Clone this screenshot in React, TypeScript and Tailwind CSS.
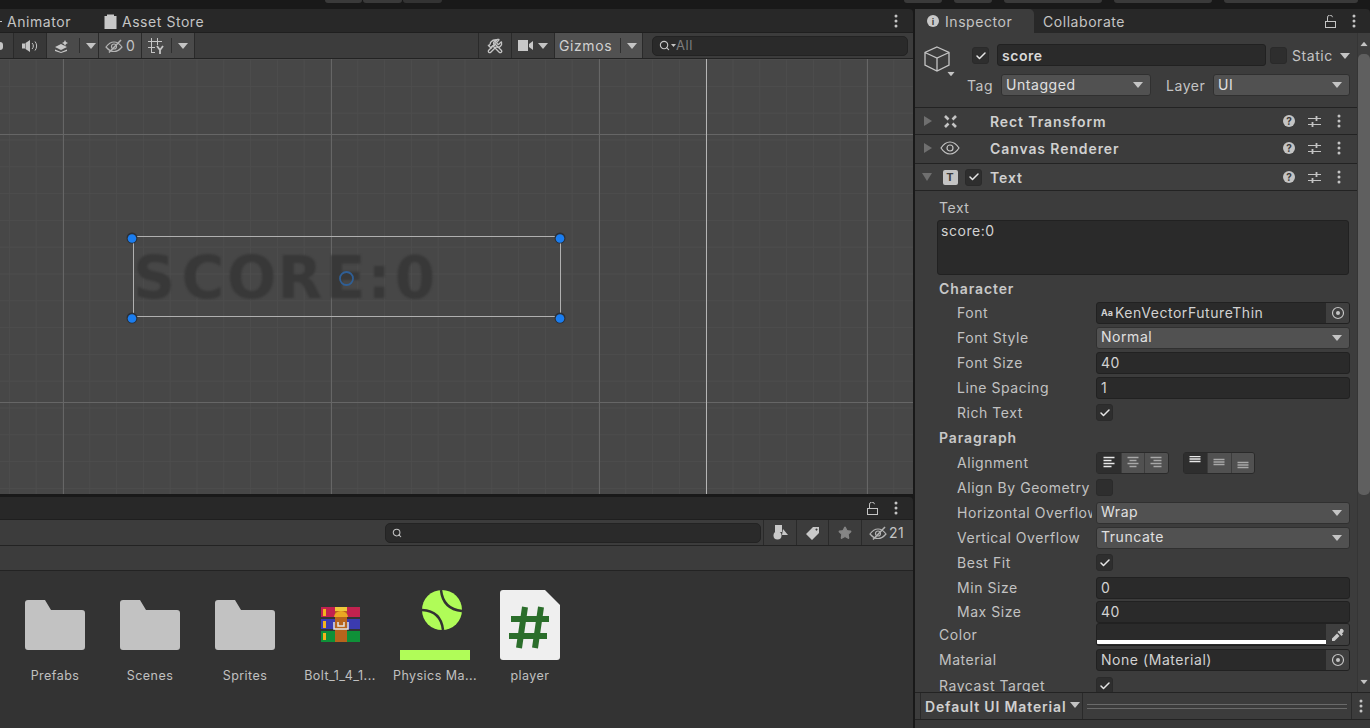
import type { ReactNode } from 'react';
import { Check, Search, Star, Wrench, Hammer } from 'lucide-react';

const Tri = ({ className = '' }: { className?: string }) => (
  <svg width="10" height="6" viewBox="0 0 10 6" className={className}>
    <path d="M0 0H10L5 6Z" fill="#c4c4c4" />
  </svg>
);

const Dots = ({ color = '#c4c4c4' }: { color?: string }) => (
  <svg width="4" height="14" viewBox="0 0 4 14" className="shrink-0">
    <circle cx="2" cy="2" r="1.5" fill={color} />
    <circle cx="2" cy="7" r="1.5" fill={color} />
    <circle cx="2" cy="12" r="1.5" fill={color} />
  </svg>
);

const Lock = () => (
  <svg width="11" height="13" viewBox="0 0 11 13" fill="none" stroke="#c4c4c4" strokeWidth="1" className="shrink-0">
    <rect x="0.5" y="6.5" width="10" height="6" />
    <path d="M2.5 6V3a2.5 2.5 0 0 1 5 -0.8" />
  </svg>
);

const EyeOff = ({ w = 18 }: { w?: number }) => (
  <svg width={w} height="14" viewBox="0 0 18 14" fill="none" stroke="#b4b4b4" strokeWidth="1.2" className="shrink-0">
    <path d="M1 8c2.500-3.500 5-5 8-5s5.500 1.500 8 5c-2.500 3-5 4.500-8 4.500S3.500 11 1 8Z" />
    <circle cx="9" cy="7.500" r="2.500" />
    <path d="M4 13.500 16 1" strokeWidth="1.500" />
  </svg>
);

const Checkbox = ({ checked = true, className = '' }: { checked?: boolean; className?: string }) => (
  <div className={`flex h-[17px] w-[17px] shrink-0 items-center justify-center rounded-[3px] border border-[#2a2a2a] bg-[#2e2e2e] ${className}`}>
    {checked && <Check size={12} strokeWidth={3} className="text-[#e6e6e6]" />}
  </div>
);

const Dropdown = ({ label, className = '' }: { label: string; className?: string }) => (
  <div className={`flex h-[22px] items-center justify-between rounded-[3px] border border-[#303030] bg-[#515151] pl-[4px] pr-[7px] text-[#e0e0e0] ${className}`}>
    <span className="-mt-[2px]">{label}</span>
    <Tri />
  </div>
);

const Field = ({ value }: { value: string }) => (
  <div className="flex h-[22px] w-[254px] items-center rounded-[3px] border border-[#212121] bg-[#2a2a2a] pl-[4px] text-[#d2d2d2]">{value}</div>
);

const Target = () => (
  <svg width="14" height="14" viewBox="0 0 14 14" fill="none">
    <circle cx="7" cy="7" r="5.500" stroke="#c4c4c4" strokeWidth="1.200" />
    <circle cx="7" cy="7" r="2" fill="#c4c4c4" />
  </svg>
);

const ObjectField = ({ children }: { children: ReactNode }) => (
  <div className="flex h-[22px] w-[254px] items-center justify-between overflow-hidden rounded-[3px] border border-[#212121] bg-[#2a2a2a] text-[#d2d2d2]">
    <div className="flex items-center pl-[4px]">{children}</div>
    <div className="flex h-full w-[23px] items-center justify-center bg-[#3f3f3f]">
      <Target />
    </div>
  </div>
);

const Row = ({ label, sub = true, h = 'h-[25px]', children }: { label: string; sub?: boolean; h?: string; children?: ReactNode }) => (
  <div className={`flex items-center ${h}`}>
    <div className={`shrink-0 overflow-hidden whitespace-nowrap ${sub ? 'ml-[42px] mr-[4px] w-[135px]' : 'ml-[24px] w-[157px]'} text-[#c2c2c2]`}>{label}</div>
    {children}
  </div>
);

const Sliders = () => (
  <svg width="13" height="13" viewBox="0 0 13 13" stroke="#c4c4c4" strokeWidth="1.200" className="shrink-0">
    <path d="M0 3.500H13M0 9.500H13" />
    <path d="M8.500 1V6M4.500 7V12" strokeWidth="1.800" />
  </svg>
);

const Help = () => (
  <span className="flex h-[12px] w-[12px] items-center justify-center rounded-full bg-[#c4c4c4] text-[10px] font-bold leading-none tracking-normal text-[#3c3c3c]">?</span>
);

const ComponentHeader = ({ title, h, tri = 'right', icon, check, className = '' }: { title: string; h: string; tri?: 'right' | 'down'; icon: ReactNode; check?: boolean; className?: string }) => (
  <div className={`flex items-center border-b border-[#232323] ${h} ${className}`}>
    <div className="flex w-[17px] justify-end">
      {tri === 'right' ? (
        <svg width="8" height="10" viewBox="0 0 8 10"><path d="M0 0V10L8 5Z" fill="#6f6f6f" /></svg>
      ) : (
        <svg width="10" height="8" viewBox="0 0 10 8"><path d="M0 0H10L5 8Z" fill="#6f6f6f" /></svg>
      )}
    </div>
    <div className="ml-[7px] flex w-[22px] justify-center">{icon}</div>
    <div className="mr-[4px] flex w-[25px] justify-center">{check && <Checkbox />}</div>
    <div className="w-[293px] font-semibold tracking-[0.9px] text-[#d0d0d0]">{title}</div>
    <div className="flex items-center">
      <Help />
      <div className="ml-[13px]"><Sliders /></div>
      <div className="ml-[16px]"><Dots /></div>
    </div>
  </div>
);

const AlignGlyph = ({ kind, lit }: { kind: string; lit?: boolean }) => {
  const c = lit ? '#e8e8e8' : '#a8a8a8';
  const rows: Record<string, [number, number, number][]> = {
    left: [[0, 11, 1], [0, 8, 4], [0, 11, 7], [0, 8, 10]],
    center: [[0, 11, 1], [2, 9, 4], [0, 11, 7], [2, 9, 10]],
    right: [[0, 11, 1], [3, 11, 4], [0, 11, 7], [3, 11, 10]],
    top: [[0, 11, 0], [0, 11, 2.500], [0, 11, 5]],
    mid: [[0, 11, 3], [0, 11, 5.500], [0, 11, 8]],
    bot: [[0, 11, 6], [0, 11, 8.500], [0, 11, 11]],
  };
  return (
    <svg width="12" height="13" viewBox="0 0 11 13" stroke={c} strokeWidth="1.300">
      {rows[kind].map(([a, b, y], i) => <path key={i} d={`M${a} ${y + 0.5}H${b}`} />)}
    </svg>
  );
};

const AlignGroup = ({ kinds }: { kinds: string[] }) => (
  <div className="flex h-[22px] overflow-hidden rounded-[3px] border border-[#2a2a2a]">
    {kinds.map((k, i) => (
      <div key={k} className={`flex w-[23.500px] items-center justify-center ${i === 0 ? 'bg-[#2e2e2e]' : 'border-l border-[#3c3c3c] bg-[#515151]'}`}>
        <AlignGlyph kind={k} lit={i === 0} />
      </div>
    ))}
  </div>
);

const Scene = () => {
  const xs: number[] = [];
  const ys: number[] = [];
  for (let i = 0; i < 36; i++) xs.push(9.4 + i * 26.8);
  for (let i = 0; i < 18; i++) ys.push(0.6 + i * 26.8);
  return (
    <div className="relative h-[435px] overflow-hidden bg-[#474747]">
      <svg width="913" height="435" className="absolute left-0 top-0">
        {xs.map((x) => <line key={x} x1={x} x2={x} y1="0" y2="435" stroke="#4e4e4e" />)}
        {ys.map((y) => <line key={y} x1="0" x2="913" y1={y} y2={y} stroke="#4e4e4e" />)}
        {[63.5, 331.5, 599.5, 867.5].map((x) => <line key={x} x1={x} x2={x} y1="0" y2="435" stroke="#666666" />)}
        {[75.5, 343.5].map((y) => <line key={y} x1="0" x2="913" y1={y} y2={y} stroke="#666666" />)}
        <line x1="706.5" x2="706.5" y1="0" y2="435" stroke="#b5b5b5" />
      </svg>
      <div className="absolute left-[130px] top-[184px] flex h-[70px] items-center font-['DejaVu_Sans',sans-serif] text-[58px] font-bold leading-none tracking-normal text-[#383838] blur-[1px]">
        {'SCOR'.split('').map((c) => <span key={c} className="w-[48.500px] text-center">{c}</span>)}
        <span className="w-[43px] text-center">E</span>
        <span className="w-[24px] text-center">:</span>
        <span className="w-[48px] text-center">0</span>
      </div>
      <svg width="913" height="435" className="absolute left-0 top-0">
        <rect x="133.500" y="177.500" width="427" height="80" fill="none" stroke="#b0b0b0" />
        {[[132, 179], [560, 179], [132, 259], [560, 259]].map(([x, y]) => (
          <g key={`${x}-${y}`}>
            <circle cx={x} cy={y} r="5.500" fill="#2b2f36" />
            <circle cx={x} cy={y + 0.5} r="4.300" fill="#1a7df0" />
          </g>
        ))}
        <circle cx="346.500" cy="219.500" r="6.500" fill="none" stroke="#2f5f96" strokeWidth="1.800" />
      </svg>
    </div>
  );
};

const Asset = ({ label, children }: { label: string; children: ReactNode }) => (
  <div className="flex w-[95px] shrink-0 flex-col items-center">
    <svg width="70" height="70" viewBox="0 0 70 70">{children}</svg>
    <div className="mt-[8px] pl-[1px] text-[12.500px] leading-4 tracking-[0.45px] text-[#c0c0c0]">{label}</div>
  </div>
);

const Folder = () => (
  <path d="M5 13a3 3 0 0 1 3-3h17l6 10h31a3 3 0 0 1 3 3v34a3 3 0 0 1-3 3H8a3 3 0 0 1-3-3Z" fill="#c2c2c2" />
);

const RarIcon = () => (
  <g>
    <rect x="16" y="17" width="39" height="10" fill="#c2224f" />
    <rect x="16" y="29" width="39" height="10" fill="#3b3bb0" />
    <rect x="16" y="41" width="39" height="11" fill="#0f9138" />
    <rect x="18" y="19" width="3" height="7" fill="#f3b41d" />
    <rect x="18" y="31" width="3" height="7" fill="#f3b41d" />
    <rect x="18" y="43" width="3" height="7" fill="#f3b41d" />
    <rect x="30" y="17" width="12" height="35" fill="#b8641c" />
    <rect x="30" y="17" width="12" height="4" fill="#eec83a" />
    <path d="M29 27a7 6 0 0 1 14 0Z" fill="#eba722" />
    <path d="M29 32V39H43V32M33 32V36H39V32" fill="none" stroke="#e4e4e4" strokeWidth="1.500" />
  </g>
);

const BallIcon = () => (
  <g>
    <circle cx="42" cy="20" r="20" fill="#b0fc58" />
    <path d="M41 0Q43 19 62 21M22 20Q41 21 43 40" fill="none" stroke="#333333" strokeWidth="2.500" />
    <rect x="0" y="60" width="70" height="10" fill="#b0fc58" />
  </g>
);

const ScriptIcon = () => (
  <g>
    <path d="M8 0H50L65 15V67a3 3 0 0 1-3 3H8a3 3 0 0 1-3-3V3a3 3 0 0 1 3-3Z" fill="#efefef" />
    <path d="M30 17 24 58M46 17 40 58M16 29H54M14 46H52" fill="none" stroke="#2b6e2b" strokeWidth="6" />
  </g>
);

export default function App() {
  return (
    <div className="flex h-[728px] w-[1370px] flex-col overflow-hidden bg-[#191919] font-['Inter',sans-serif] text-[14px] tracking-[0.55px] text-[#c4c4c4]">
      {/* top toolbar, only the bottom edge of its buttons shows */}
      <div className="flex h-[9px] shrink-0 items-start">
        <div className="ml-[325px] flex h-[3px] gap-px">
          <div className="h-full w-[37px] rounded-b-[3px] bg-[#3a3a3a]" />
          <div className="h-full w-[39px] rounded-b-[3px] bg-[#3a3a3a]" />
          <div className="h-full w-[39px] rounded-b-[3px] bg-[#333333]" />
        </div>
        <div className="ml-[462px] h-[3px] w-[38px] rounded-b-[3px] bg-[#3a3a3a]" />
        <div className="ml-[12px] h-[3px] w-[38px] rounded-b-[3px] bg-[#3a3a3a]" />
        <div className="ml-[12px] h-[3px] w-[98px] rounded-b-[3px] bg-[#3a3a3a]" />
        <div className="ml-[12px] h-[3px] w-[98px] rounded-b-[3px] bg-[#3a3a3a]" />
        <div className="ml-[12px] h-[3px] w-[134px] rounded-b-[3px] bg-[#3a3a3a]" />
      </div>

      <div className="flex min-h-0 flex-1">
        {/* left column */}
        <div className="flex w-[913px] shrink-0 flex-col">
          <div className="flex h-[24px] shrink-0 items-center justify-between rounded-tr-[4px] border-b border-[#1f1f1f] bg-[#282828] pt-[1px]">
            <div className="flex items-center">
              <span className="h-px w-[2px] bg-[#c4c4c4]" />
              <span className="ml-[5px]">Animator</span>
              <svg width="13" height="16" viewBox="0 0 13 16" className="ml-[33px]">
                <path d="M3 3V1.500h7V3h2.500V16H.5V3Z" fill="#c8c8c8" />
              </svg>
              <span className="ml-[5px]">Asset Store</span>
            </div>
            <div className="mr-[15px]"><Dots /></div>
          </div>
          <div className="flex h-[26px] shrink-0 items-stretch border-b border-[#232323] bg-[#3c3c3c]">
            <div className="flex w-[14px] items-center border-r border-[#2a2a2a]">
              <span className="h-[8px] w-[3px] rounded-r-full bg-[#c4c4c4]" />
            </div>
            <div className="flex w-[33px] items-center justify-center border-r border-[#2a2a2a] bg-[#383838]">
              <svg width="16" height="12" viewBox="0 0 16 12" fill="#c4c4c4"><path d="M0 3.500h3V8.500H0ZM3.500 3 8 0V12L3.500 9Z" /><path d="M10 3a4 4 0 0 1 0 6M13 1.500a7 7 0 0 1 0 9" fill="none" stroke="#c4c4c4" /></svg>
            </div>
            <div className="flex w-[52px] items-center border-r border-[#2a2a2a] bg-[#4a4a4a] pl-[7px]">
              <svg width="16" height="14" viewBox="0 0 16 14" fill="#c8c8c8"><path d="M1 8 7 5l6 3-6 3ZM1 10.500 7 13l6-2.500V12L7 14 1 12Z" /><path d="M11 1l1 2 2 1-2 1-1 2-1-2-2-1 2-1Z" /></svg>
              <span className="ml-[9px] h-[15px] w-px bg-[#2f2f2f]" />
              <Tri className="ml-[6px]" />
            </div>
            <div className="flex w-[43px] items-center border-r border-[#2a2a2a] bg-[#4a4a4a] pl-[6px]">
              <EyeOff />
              <span className="ml-[3px] text-[#c4c4c4]">0</span>
            </div>
            <div className="flex w-[53px] items-center border-r border-[#2a2a2a] bg-[#4a4a4a] pl-[6px]">
              <svg width="16" height="18" viewBox="0 0 16 18" fill="none" stroke="#c4c4c4"><path d="M3.500 1V15M9.500 1V8M0 4.500H14M0 10.500H7M3 15.500H7" /><path d="M9 9l3 4 3-4M12 13v4" strokeWidth="1.800" /></svg>
              <span className="ml-[7px] h-[15px] w-px bg-[#2f2f2f]" />
              <Tri className="ml-[6px]" />
            </div>
            <div className="flex-1" />
            <div className="flex w-[34px] items-center justify-center border-x border-[#2a2a2a]">
              <div className="relative h-[16px] w-[16px]">
                <Wrench size={16} className="absolute left-0 top-0 text-[#c4c4c4]" />
                <Hammer size={16} className="absolute left-0 top-0 -scale-x-100 text-[#c4c4c4]" />
              </div>
            </div>
            <div className="flex w-[43px] items-center justify-center gap-[5px] border-r border-[#2a2a2a]">
              <svg width="15" height="11" viewBox="0 0 15 11" fill="#c8c8c8"><rect width="10" height="11" /><path d="M11 4l4-3v9l-4-3Z" /></svg>
              <Tri />
            </div>
            <div className="flex w-[88px] items-center border-r border-[#2a2a2a] bg-[#515151] pl-[4px]">
              <span className="tracking-[0.6px] text-[#d0d0d0]">Gizmos</span>
              <span className="ml-[8px] h-[15px] w-px bg-[#2f2f2f]" />
              <Tri className="ml-[6px]" />
            </div>
            <div className="mx-[5px] ml-[9px] flex h-[20px] w-[256px] items-center self-center rounded-[5px] border border-[#232323] bg-[#2a2a2a] pl-[6px]">
              <Search size={11} strokeWidth={2.500} className="text-[#c4c4c4]" />
              <svg width="5" height="3" viewBox="0 0 5 3" className="ml-[1px]"><path d="M0 0H5L2.500 3Z" fill="#c4c4c4" /></svg>
              <span className="text-[13px] text-[#7e7e7e]">All</span>
            </div>
          </div>
          <Scene />

          <div className="h-[3px] shrink-0 bg-[#191919]" />

          <div className="flex h-[23px] shrink-0 items-center justify-end gap-[16px] rounded-tr-[4px] border-b border-[#1f1f1f] bg-[#282828] pr-[15px]">
            <Lock />
            <Dots />
          </div>
          <div className="flex h-[26px] shrink-0 items-stretch justify-end border-b border-[#232323] bg-[#3c3c3c]">
            <div className="mr-[2px] flex h-[20px] w-[376px] items-center self-center rounded-[5px] border border-[#232323] bg-[#2a2a2a] pl-[6px]">
              <Search size={10} strokeWidth={2.500} className="text-[#c4c4c4]" />
            </div>
            <div className="flex w-[34px] items-center justify-center border-x border-[#2a2a2a]">
              <svg width="15" height="15" viewBox="0 0 15 15" fill="#c8c8c8"><rect x="2" y="0" width="7" height="7" /><circle cx="4.500" cy="10.500" r="4" /><path d="M10 4l5 6h-6Z" /></svg>
            </div>
            <div className="flex w-[32px] items-center justify-center border-r border-[#2a2a2a]">
              <svg width="14" height="14" viewBox="0 0 14 14" fill="#c8c8c8"><path d="M7 1h6v6l-7 7-6-6Zm3.500 1.500a1 1 0 1 0 .01 0Z" /></svg>
            </div>
            <div className="flex w-[33px] items-center justify-center border-r border-[#2a2a2a]">
              <Star size={14} className="fill-[#858585] text-[#858585]" />
            </div>
            <div className="flex w-[51px] items-center pl-[7px]">
              <EyeOff />
              <span className="ml-[2px]">21</span>
            </div>
          </div>
          <div className="h-[25px] shrink-0 border-b border-[#232323] bg-[#3c3c3c]" />
          <div className="min-h-0 flex-1 bg-[#333333] pl-[7px] pt-[19px]">
            <div className="flex">
              <Asset label="Prefabs"><Folder /></Asset>
              <Asset label="Scenes"><Folder /></Asset>
              <Asset label="Sprites"><Folder /></Asset>
              <Asset label="Bolt_1_4_1..."><RarIcon /></Asset>
              <Asset label="Physics Ma..."><BallIcon /></Asset>
              <Asset label="player"><ScriptIcon /></Asset>
            </div>
          </div>
        </div>

        <div className="w-[2px] shrink-0 bg-[#191919]" />

        {/* inspector */}
        <div className="flex min-w-0 flex-1 flex-col">
          <div className="flex h-[24px] shrink-0 items-center rounded-tr-[4px] bg-[#282828]">
            <div className="flex h-full w-[119px] items-center rounded-tr-[5px] bg-[#3c3c3c] pl-[12px]">
              <span className="flex h-[12px] w-[12px] items-center justify-center rounded-full bg-[#c8c8c8] text-[9px] font-bold leading-none tracking-normal text-[#3c3c3c]">i</span>
              <span className="ml-[6px]">Inspector</span>
            </div>
            <span className="ml-[9px]">Collaborate</span>
            <div className="ml-auto flex items-center gap-[16px] pr-[14px]">
              <Lock />
              <Dots />
            </div>
          </div>
          <div className="flex min-h-0 flex-1">
            <div className="min-w-0 flex-1 overflow-hidden bg-[#3c3c3c]">
              <div className="h-[75px] border-b border-[#232323]">
                <div className="flex items-start pt-[11px]">
                  <svg width="26" height="28" viewBox="0 0 26 28" fill="none" stroke="#c4c4c4" strokeWidth="1.300" className="ml-[9px] mt-[1px] shrink-0">
                    <path d="M13 2 25 7.500V20L13 26 1 20V7.500ZM1 7.500 13 13l12-5.500M13 13V26" />
                  </svg>
                  <Checkbox className="ml-[22px] mt-[3px]" />
                  <div className="ml-[8px] flex h-[22px] w-[269px] items-center rounded-[3px] border border-[#212121] bg-[#2a2a2a] pl-[4px] font-semibold text-[#d8d8d8]">score</div>
                  <Checkbox checked={false} className="ml-[4px] mt-[3px]" />
                  <span className="ml-[5px] mt-[1px] w-[41px] whitespace-nowrap">Static</span>
                  <Tri className="ml-[7px] mt-[9px]" />
                </div>
                <div className="flex items-center pt-[1px]">
                  <Tri className="ml-[31px] -mt-[22px] scale-75" />
                  <span className="ml-[11px] w-[34px]">Tag</span>
                  <Dropdown label="Untagged" className="w-[150px]" />
                  <span className="ml-[15px] w-[47px]">Layer</span>
                  <Dropdown label="UI" className="w-[137px]" />
                </div>
              </div>

              <ComponentHeader title="Rect Transform" h="h-[27px]" icon={
                <svg width="15" height="15" viewBox="0 0 15 15" stroke="#c4c4c4" strokeWidth="2.600" fill="none">
                  <path d="M2 2 5.500 5.500M13 2 9.500 5.500M2 13 5.500 9.500M13 13 9.500 9.500" />
                </svg>
              } />
              <ComponentHeader title="Canvas Renderer" h="h-[29px]" className="pb-[2px]" icon={
                <svg width="20" height="14" viewBox="0 0 20 14" fill="none" stroke="#c4c4c4" strokeWidth="1.200"><path d="M1 7c2.500-3.800 5.500-6 9-6s6.500 2.200 9 6c-2.500 3.800-5.500 6-9 6S3.500 10.800 1 7Z" /><circle cx="10" cy="7" r="3" /></svg>
              } />
              <ComponentHeader title="Text" h="h-[27px]" tri="down" check className="bg-[#3f3f3f]" icon={
                <span className="flex h-[15px] w-[15px] items-center justify-center rounded-[2px] bg-[#c4c4c4] text-[11px] font-bold leading-none tracking-normal text-[#3c3c3c]">T</span>
              } />

              <div className="ml-[24px] mt-[6px] h-[23px] leading-[22px] text-[#c2c2c2]">Text</div>
              <div className="ml-[22px] h-[55px] w-[412px] rounded-[3px] border border-[#212121] bg-[#2a2a2a] pl-[3px] leading-[20px] text-[#d2d2d2]">score:0</div>
              <div className="ml-[24px] flex h-[25px] items-center pt-[2px] font-semibold tracking-[0.9px] text-[#c8c8c8]">Character</div>

              <Row label="Font">
                <ObjectField>
                  <span className="mr-[2px] text-[9px] font-bold tracking-normal">Aa</span>
                  <span>KenVectorFutureThin</span>
                </ObjectField>
              </Row>
              <Row label="Font Style"><Dropdown label="Normal" className="w-[254px]" /></Row>
              <Row label="Font Size"><Field value="40" /></Row>
              <Row label="Line Spacing"><Field value="1" /></Row>
              <Row label="Rich Text"><Checkbox /></Row>
              <div className="ml-[24px] flex h-[25px] items-center font-semibold tracking-[0.9px] text-[#c8c8c8]">Paragraph</div>
              <Row label="Alignment">
                <AlignGroup kinds={['left', 'center', 'right']} />
                <div className="ml-[14px]"><AlignGroup kinds={['top', 'mid', 'bot']} /></div>
              </Row>
              <Row label="Align By Geometry"><Checkbox checked={false} /></Row>
              <Row label="Horizontal Overflow"><Dropdown label="Wrap" className="w-[254px]" /></Row>
              <Row label="Vertical Overflow"><Dropdown label="Truncate" className="w-[254px]" /></Row>
              <Row label="Best Fit"><Checkbox /></Row>
              <Row label="Min Size"><Field value="0" /></Row>
              <Row label="Max Size" h="h-[23px]"><Field value="40" /></Row>
              <Row label="Color" sub={false} h="h-[23px]">
                <div className="flex h-[23px] w-[254px] overflow-hidden rounded-[3px] border border-[#212121] bg-[#2a2a2a]">
                  <div className="flex flex-1 flex-col justify-end pb-[1px]"><div className="h-[4px] bg-white" /></div>
                  <div className="flex w-[23px] items-center justify-center bg-[#3f3f3f]">
                    <svg width="14" height="14" viewBox="0 0 14 14" fill="#c8c8c8"><path d="M9 1.500a2.200 2.200 0 0 1 3.500 2.500L11 5.500l1 1-1.500 1.500-4-4L8 2.500l1 1ZM6 5.500 8.500 8 3.500 13H1v-2.500Z" /></svg>
                  </div>
                </div>
              </Row>
              <Row label="Material" sub={false} h="h-[27px]">
                <ObjectField>None (Material)</ObjectField>
              </Row>
              <Row label="Raycast Target" sub={false}><Checkbox /></Row>
            </div>
            <div className="flex w-[13px] shrink-0 flex-col items-stretch border-l border-[#353535] bg-[#3e3e3e]">
              <div className="flex h-[21px] shrink-0 items-center justify-center"><Tri className="rotate-180 scale-75" /></div>
              <div className="h-[441px] shrink-0 rounded-[5px] bg-[#5f5f5f]" />
              <div className="flex flex-1 items-end justify-center pb-[7px]"><Tri className="scale-75" /></div>
            </div>
          </div>
          <div className="flex h-[28px] shrink-0 items-center border-y border-[#232323] bg-[#3c3c3c]">
            <div className="ml-[5px] flex h-full w-[163px] items-center border-x border-[#2a2a2a] pl-[4px] font-semibold tracking-[0.85px] text-[#d0d0d0]">
              <span className="whitespace-nowrap">Default UI Material</span>
              <Tri className="ml-[4px] -mt-[3px]" />
            </div>
            <div className="mx-[4px] flex h-[5px] flex-1 flex-col justify-between">
              <div className="h-px bg-[#6a6a6a]" />
              <div className="h-px bg-[#6a6a6a]" />
            </div>
            <div className="flex h-full w-[19px] items-center justify-center border-l border-[#2a2a2a]"><Dots /></div>
          </div>
          <div className="h-[8px] shrink-0 bg-[#383838]" />
        </div>
      </div>
    </div>
  );
}
